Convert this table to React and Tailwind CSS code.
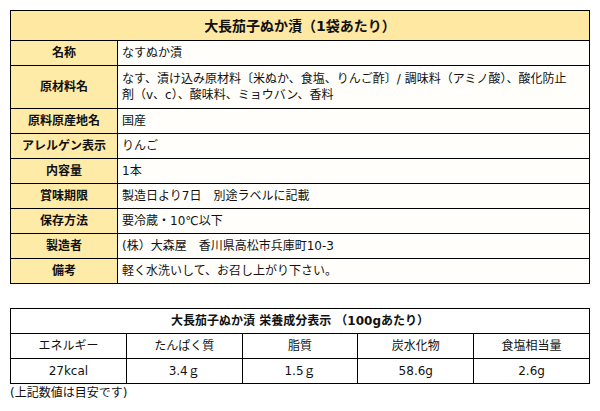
import React from "react";

const rows = [
   { label: "名称", value: "なすぬか漬" },
   {
      label: "原材料名",
      value: (
         <>
            なす、漬け込み原材料〔米ぬか、食塩、りんご酢〕/ 調味料（アミノ酸）、酸化防止
            <br />
            剤（v、c）、酸味料、ミョウバン、香料
         </>
      ),
      tall: true,
   },
   { label: "原料原産地名", value: "国産" },
   { label: "アレルゲン表示", value: "りんご" },
   { label: "内容量", value: "1本" },
   { label: "賞味期限", value: "製造日より7日　別途ラベルに記載" },
   { label: "保存方法", value: "要冷蔵・10℃以下" },
   { label: "製造者", value: "(株）大森屋　香川県高松市兵庫町10-3" },
   { label: "備考", value: "軽く水洗いして、お召し上がり下さい。" },
];

const nutrients = [
   { name: "エネルギー", amount: "27kcal" },
   { name: "たんぱく質", amount: "3.4ｇ" },
   { name: "脂質", amount: "1.5ｇ" },
   { name: "炭水化物", amount: "58.6g" },
   { name: "食塩相当量", amount: "2.6g" },
];

export default function App() {
   return (
      <div
         className="w-[600px] h-[411px] bg-white text-[#111111] pt-[10px] px-[10px]"
         style={{ fontFamily: '"DejaVu Sans", "Noto Sans CJK JP", sans-serif' }}
      >
         <table className="w-[580px] border-collapse border border-black text-[12px] leading-[16px]">
            <tbody>
               <tr className="h-[30px] bg-[#ffe8a1]">
                  <td
                     colSpan={2}
                     className="border border-black text-center font-bold text-[14px]"
                  >
                     大長茄子ぬか漬（1袋あたり）
                  </td>
               </tr>
               {rows.map((row) => (
                  <tr
                     key={row.label}
                     className={row.tall ? "h-[43px]" : "h-[25px]"}
                  >
                     <td className="w-[107px] border border-black bg-[#ffeba8] text-center font-bold whitespace-nowrap">
                        {row.label}
                     </td>
                     <td className="border border-black bg-[#fffefa] pl-[4px] pr-[2px] whitespace-nowrap">
                        {row.value}
                     </td>
                  </tr>
               ))}
            </tbody>
         </table>

         <table className="mt-[24px] w-[580px] table-fixed border-collapse border border-black text-[12px] leading-[16px]">
            <tbody>
               <tr className="h-[25px]">
                  <td
                     colSpan={5}
                     className="border border-black text-center font-bold"
                  >
                     大長茄子ぬか漬 栄養成分表示 （100gあたり）
                  </td>
               </tr>
               <tr className="h-[25px]">
                  {nutrients.map((n) => (
                     <td key={n.name} className="border border-black text-center">
                        {n.name}
                     </td>
                  ))}
               </tr>
               <tr className="h-[25px]">
                  {nutrients.map((n) => (
                     <td key={n.name} className="border border-black text-center">
                        {n.amount}
                     </td>
                  ))}
               </tr>
            </tbody>
         </table>
         <p className="text-[12px] leading-[16px] mt-[1px]">(上記数値は目安です)</p>
      </div>
   );
}
